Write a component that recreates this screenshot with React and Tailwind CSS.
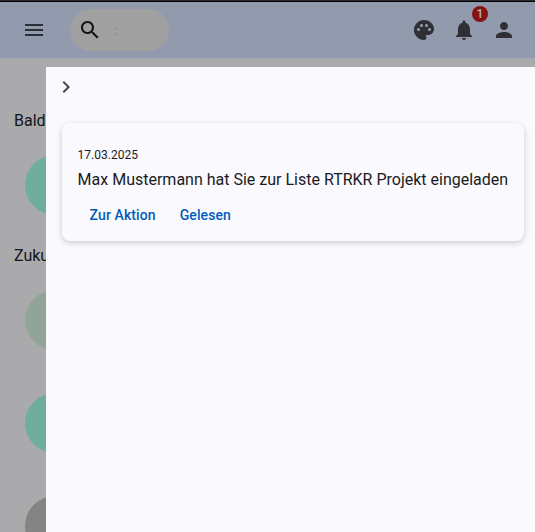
const icons = {
  menu: "M3 18h18v-2H3v2zm0-5h18v-2H3v2zm0-7v2h18V6H3z",
  search:
    "M15.5 14h-.79l-.28-.27C15.41 12.59 16 11.11 16 9.5 16 5.91 13.09 3 9.5 3S3 5.91 3 9.5 5.91 16 9.5 16c1.61 0 3.09-.59 4.23-1.57l.27.28v.79l5 4.99L20.49 19l-4.99-5zm-6 0C7.01 14 5 11.99 5 9.5S7.01 5 9.5 5 14 7.01 14 9.5 11.99 14 9.5 14z",
  palette:
    "M12 2C6.49 2 2 6.49 2 12s4.49 10 10 10c1.38 0 2.5-1.12 2.5-2.5 0-.61-.23-1.2-.64-1.67-.08-.1-.13-.21-.13-.33 0-.28.22-.5.5-.5H16c3.31 0 6-2.69 6-6 0-4.96-4.49-9-10-9zm5.5 11c-.83 0-1.5-.67-1.5-1.5s.67-1.5 1.5-1.5 1.5.67 1.5 1.5-.67 1.5-1.5 1.5zm-3-4c-.83 0-1.5-.67-1.5-1.5S13.67 6 14.5 6s1.5.67 1.5 1.5S15.33 9 14.5 9zM5 11.5c0-.83.67-1.5 1.5-1.5s1.5.67 1.5 1.5S7.33 13 6.5 13 5 12.33 5 11.5zm6-4c0 .83-.67 1.5-1.5 1.5S8 8.33 8 7.5 8.67 6 9.5 6s1.5.67 1.5 1.5z",
  bell: "M12 22c1.1 0 2-.9 2-2h-4c0 1.1.89 2 2 2zm6-6v-5c0-3.07-1.64-5.64-4.5-6.32V4c0-.83-.67-1.5-1.5-1.5s-1.5.67-1.5 1.5v.68C7.63 5.36 6 7.92 6 11v5l-2 2v1h16v-1l-2-2z",
  person:
    "M12 12c2.21 0 4-1.79 4-4s-1.79-4-4-4-4 1.79-4 4 1.79 4 4 4zm0 2c-2.67 0-8 1.34-8 4v2h16v-2c0-2.66-5.33-4-8-4z",
  chevron: "M10 6L8.59 7.41 13.17 12l-4.58 4.59L10 18l6-6z",
};

function Icon({ name, className = "" }) {
  return (
    <svg viewBox="0 0 24 24" fill="currentColor" className={`size-6 shrink-0 ${className}`}>
      <path d={icons[name]} />
    </svg>
  );
}

function Avatar({ className }) {
  return <div className={`ml-[25px] size-[60px] shrink-0 rounded-full ${className}`} />;
}

function TopBar() {
  return (
    <header className="flex h-[57px] shrink-0 items-center border-t border-black bg-[#929bae] pr-[19px] pl-[22px] text-[#2f3036]">
      <button aria-label="Menu">
        <Icon name="menu" className="text-[#2a2e35]" />
      </button>
      <div className="ml-6 flex h-[42px] w-[99px] items-center rounded-full bg-[#a0a0a1] pl-2">
        <Icon name="search" className="text-[#111214]" />
        <span className="mt-0.5 ml-[13px] text-[12px] text-[#8d7a68]">:</span>
      </div>
      <div className="ml-auto flex gap-4">
        <Icon name="palette" />
        <div className="relative">
          <Icon name="bell" />
          <span className="absolute -top-3 left-5 flex size-4 items-center justify-center rounded-full bg-[#861214] text-xs font-medium text-[#b9b4b4]">
            1
          </span>
        </div>
        <Icon name="person" />
      </div>
    </header>
  );
}

export default function App() {
  return (
    <div className="flex h-[532px] w-[535px] flex-col overflow-hidden border-t border-[#2c2a30] bg-[#aaaaac] font-[Roboto,sans-serif] text-[#1a1b1f]">
      <TopBar />
      <div className="flex min-h-0 flex-1">
        <main className="flex w-[46px] shrink-0 flex-col overflow-hidden pt-[51px] text-base text-[#141518]">
          <h2 className="pl-[14px] whitespace-nowrap">Bald</h2>
          <Avatar className="mt-[22px] bg-[#6fae9c]" />
          <h2 className="mt-[29px] pl-[14px] whitespace-nowrap">Zuku</h2>
          <Avatar className="mt-[22px] bg-[#92a498]" />
          <Avatar className="mt-[43px] bg-[#6fae9c]" />
          <Avatar className="mt-[43px] bg-[#848484]" />
        </main>
        <aside className="mt-[9px] flex-1 bg-[#faf9fd] pt-2 pr-[11px] pl-4">
          <button aria-label="Schließen" className="-ml-[8.5px] block text-[#44474e]">
            <Icon name="chevron" />
          </button>
          <article className="mt-6 h-[118px] w-[462px] rounded-lg bg-[#faf9fd] pt-6 pr-4 pl-[15.6px] shadow-[0_2px_5px_0_rgba(0,0,0,0.12),0_2px_10px_0_rgba(0,0,0,0.07)]">
            <p className="text-xs leading-4">17.03.2025</p>
            <p className="mt-[5px] text-base leading-6 whitespace-nowrap">
              Max Mustermann hat Sie zur Liste RTRKR Projekt eingeladen
            </p>
            <div className="mt-[13px] flex gap-6 pl-3 text-sm leading-5 font-medium tracking-[0.1px] text-[#005cbb]">
              <button>Zur Aktion</button>
              <button>Gelesen</button>
            </div>
          </article>
        </aside>
      </div>
    </div>
  );
}
